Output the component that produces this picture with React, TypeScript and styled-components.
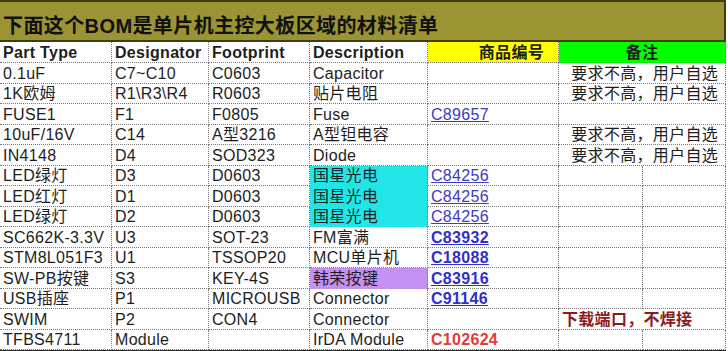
import React from 'react';
import styled, { createGlobalStyle } from 'styled-components';

const GlobalStyle = createGlobalStyle`
  html, body {
    margin: 0;
    padding: 0;
    background: #ffffff;
  }
  body {
    font-family: "Liberation Sans", "Noto Sans CJK SC", sans-serif;
    color: #1e1e1e;
  }
`;

type Tone = 'plain' | 'link' | 'linkBold' | 'code' | 'warn';

interface CellData {
  text?: string;
  tone?: Tone;
  fill?: string;
  span?: number;
  align?: 'left' | 'center' | 'right';
}

const Sheet = styled.div`
  width: 726px;
  display: flex;
  flex-direction: column;
`;

const TitleBar = styled.div`
  height: 42px;
  box-sizing: border-box;
  background: #9b9433;
  border-top: 2px solid #3f3d14;
  border-right: 2px solid #3f3d14;
  border-bottom: 2px solid #3f3d14;
  display: flex;
  align-items: flex-end;
  padding: 0 0 4px 3px;
  font-size: 20px;
  line-height: 1;
  letter-spacing: 0.4px;
  font-weight: bold;
  color: #111;
`;

const Grid = styled.div`
  display: grid;
  grid-template-columns: 112px 97px 101px 118px 131px 84px 83px;
  grid-template-rows: 21px;
  grid-auto-rows: 20.5px;
  border-bottom: 2px solid #2b2b2b;
`;

const alignMap: Record<string, string> = {
  left: 'flex-start',
  center: 'center',
  right: 'flex-end',
};

const HeadCell = styled.div<{ $fill?: string; $span?: number; $align?: string }>`
  grid-column: span ${p => p.$span ?? 1};
  box-sizing: border-box;
  background: ${p => p.$fill ?? '#fff'};
  border-right: 1px dotted #7a7a7a;
  border-bottom: 1px dotted #7a7a7a;
  padding: ${p => (p.$align === 'right' ? '0 14px 0 3px' : '0 3px')};
  display: flex;
  align-items: flex-end;
  justify-content: ${p => alignMap[p.$align ?? 'left']};
  font-size: 16px;
  line-height: 19px;
  font-weight: bold;
  letter-spacing: 0.3px;
  white-space: nowrap;
  overflow: hidden;
`;

const toneColor: Record<Tone, string> = {
  plain: '#1e1e1e',
  link: '#3b3bc4',
  linkBold: '#2f2fcf',
  code: '#e23b3b',
  warn: '#8e1b1b',
};

const Cell = styled.div<{ $fill?: string; $span?: number; $align?: string; $tone: Tone }>`
  grid-column: span ${p => p.$span ?? 1};
  box-sizing: border-box;
  background: ${p => p.$fill ?? '#fff'};
  border-right: 1px dotted #7a7a7a;
  border-bottom: 1px dotted ${p => p.$fill ?? '#7a7a7a'};
  padding: ${p => (p.$align === 'right' ? '0 7px 0 3px' : '0 3px')};
  display: flex;
  align-items: flex-end;
  justify-content: ${p => alignMap[p.$align ?? 'left']};
  font-size: 16px;
  line-height: 19px;
  letter-spacing: 0.3px;
  color: ${p => toneColor[p.$tone]};
  font-weight: ${p => (p.$tone === 'plain' || p.$tone === 'link' ? 'normal' : 'bold')};
  text-decoration: ${p => (p.$tone === 'link' || p.$tone === 'linkBold' ? 'underline' : 'none')};
  white-space: nowrap;
  overflow: hidden;
`;

const CYAN = '#22e6e6';
const VIOLET = '#c490f2';
const REMARK = '要求不高，用户自选';

const remark: CellData = { text: REMARK, span: 2, align: 'right' };
const blankWide: CellData = { span: 2 };
const blank: CellData = {};

const rows: CellData[][] = [
  [{ text: '0.1uF' }, { text: 'C7~C10' }, { text: 'C0603' }, { text: 'Capacitor' }, blank, remark],
  [{ text: '1K欧姆' }, { text: 'R1\\R3\\R4' }, { text: 'R0603' }, { text: '贴片电阻' }, blank, remark],
  [{ text: 'FUSE1' }, { text: 'F1' }, { text: 'F0805' }, { text: 'Fuse' }, { text: 'C89657', tone: 'link' }, blankWide],
  [{ text: '10uF/16V' }, { text: 'C14' }, { text: 'A型3216' }, { text: 'A型钽电容' }, blank, remark],
  [{ text: 'IN4148' }, { text: 'D4' }, { text: 'SOD323' }, { text: 'Diode' }, blank, remark],
  [{ text: 'LED绿灯' }, { text: 'D3' }, { text: 'D0603' }, { text: '国星光电', fill: CYAN }, { text: 'C84256', tone: 'link' }, blank, blank],
  [{ text: 'LED红灯' }, { text: 'D1' }, { text: 'D0603' }, { text: '国星光电', fill: CYAN }, { text: 'C84256', tone: 'link' }, blank, blank],
  [{ text: 'LED绿灯' }, { text: 'D2' }, { text: 'D0603' }, { text: '国星光电', fill: CYAN }, { text: 'C84256', tone: 'link' }, blank, blank],
  [{ text: 'SC662K-3.3V' }, { text: 'U3' }, { text: 'SOT-23' }, { text: 'FM富满' }, { text: 'C83932', tone: 'linkBold' }, blank, blank],
  [{ text: 'STM8L051F3' }, { text: 'U1' }, { text: 'TSSOP20' }, { text: 'MCU单片机' }, { text: 'C18088', tone: 'linkBold' }, blank, blank],
  [{ text: 'SW-PB按键' }, { text: 'S3' }, { text: 'KEY-4S' }, { text: '韩荣按键', fill: VIOLET }, { text: 'C83916', tone: 'linkBold' }, blank, blank],
  [{ text: 'USB插座' }, { text: 'P1' }, { text: 'MICROUSB' }, { text: 'Connector' }, { text: 'C91146', tone: 'linkBold' }, blank, blank],
  [{ text: 'SWIM' }, { text: 'P2' }, { text: 'CON4' }, { text: 'Connector' }, blank, { text: '下载端口，不焊接', tone: 'warn', span: 2 }],
  [{ text: 'TFBS4711' }, { text: 'Module' }, blank, { text: 'IrDA Module' }, { text: 'C102624', tone: 'code' }, blank, blank],
];

export default function App() {
  return (
    <>
      <GlobalStyle />
      <Sheet>
        <TitleBar>下面这个BOM是单片机主控大板区域的材料清单</TitleBar>
        <Grid>
          <HeadCell>Part Type</HeadCell>
          <HeadCell>Designator</HeadCell>
          <HeadCell>Footprint</HeadCell>
          <HeadCell>Description</HeadCell>
          <HeadCell $fill="#ffff00" $align="right">商品编号</HeadCell>
          <HeadCell $fill="#00ff00" $align="center" $span={2}>备注</HeadCell>
          {rows.map((row, r) =>
            row.map((c, i) => (
              <Cell
                key={`${r}-${i}`}
                $fill={c.fill}
                $span={c.span}
                $align={c.align}
                $tone={c.tone ?? 'plain'}
              >
                {c.text}
              </Cell>
            ))
          )}
        </Grid>
      </Sheet>
    </>
  );
}
